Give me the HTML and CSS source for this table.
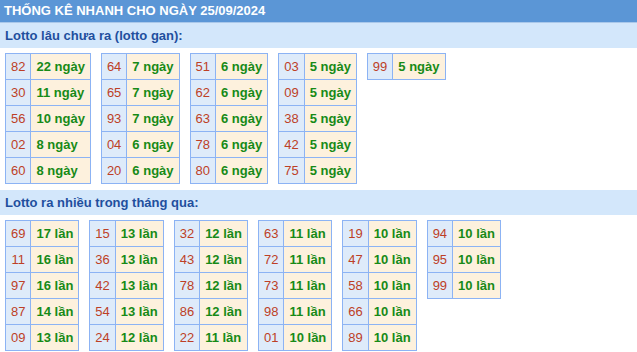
FILE: index.html
```html
<!DOCTYPE html>
<html lang="vi">
<head>
<meta charset="utf-8">
<link rel="stylesheet" href="styles.css">
</head>
<body>
<div class="title">THỐNG KÊ NHANH CHO NGÀY 25/09/2024</div>
<div class="section">Lotto lâu chưa ra (lotto gan):</div>
<div class="tables">
  <table><tr><td class="n">82</td><td class="v">22 ngày</td></tr><tr><td class="n">30</td><td class="v">11 ngày</td></tr><tr><td class="n">56</td><td class="v">10 ngày</td></tr><tr><td class="n">02</td><td class="v">8 ngày</td></tr><tr><td class="n">60</td><td class="v">8 ngày</td></tr></table>
  <table><tr><td class="n">64</td><td class="v">7 ngày</td></tr><tr><td class="n">65</td><td class="v">7 ngày</td></tr><tr><td class="n">93</td><td class="v">7 ngày</td></tr><tr><td class="n">04</td><td class="v">6 ngày</td></tr><tr><td class="n">20</td><td class="v">6 ngày</td></tr></table>
  <table><tr><td class="n">51</td><td class="v">6 ngày</td></tr><tr><td class="n">62</td><td class="v">6 ngày</td></tr><tr><td class="n">63</td><td class="v">6 ngày</td></tr><tr><td class="n">78</td><td class="v">6 ngày</td></tr><tr><td class="n">80</td><td class="v">6 ngày</td></tr></table>
  <table><tr><td class="n">03</td><td class="v">5 ngày</td></tr><tr><td class="n">09</td><td class="v">5 ngày</td></tr><tr><td class="n">38</td><td class="v">5 ngày</td></tr><tr><td class="n">42</td><td class="v">5 ngày</td></tr><tr><td class="n">75</td><td class="v">5 ngày</td></tr></table>
  <table><tr><td class="n">99</td><td class="v">5 ngày</td></tr></table>
</div>
<div class="section">Lotto ra nhiều trong tháng qua:</div>
<div class="tables">
  <table><tr><td class="n">69</td><td class="v">17 lần</td></tr><tr><td class="n">11</td><td class="v">16 lần</td></tr><tr><td class="n">97</td><td class="v">16 lần</td></tr><tr><td class="n">87</td><td class="v">14 lần</td></tr><tr><td class="n">09</td><td class="v">13 lần</td></tr></table>
  <table><tr><td class="n">15</td><td class="v">13 lần</td></tr><tr><td class="n">36</td><td class="v">13 lần</td></tr><tr><td class="n">42</td><td class="v">13 lần</td></tr><tr><td class="n">54</td><td class="v">13 lần</td></tr><tr><td class="n">24</td><td class="v">12 lần</td></tr></table>
  <table><tr><td class="n">32</td><td class="v">12 lần</td></tr><tr><td class="n">43</td><td class="v">12 lần</td></tr><tr><td class="n">78</td><td class="v">12 lần</td></tr><tr><td class="n">86</td><td class="v">12 lần</td></tr><tr><td class="n">22</td><td class="v">11 lần</td></tr></table>
  <table><tr><td class="n">63</td><td class="v">11 lần</td></tr><tr><td class="n">72</td><td class="v">11 lần</td></tr><tr><td class="n">73</td><td class="v">11 lần</td></tr><tr><td class="n">98</td><td class="v">11 lần</td></tr><tr><td class="n">01</td><td class="v">10 lần</td></tr></table>
  <table><tr><td class="n">19</td><td class="v">10 lần</td></tr><tr><td class="n">47</td><td class="v">10 lần</td></tr><tr><td class="n">58</td><td class="v">10 lần</td></tr><tr><td class="n">66</td><td class="v">10 lần</td></tr><tr><td class="n">89</td><td class="v">10 lần</td></tr></table>
  <table><tr><td class="n">94</td><td class="v">10 lần</td></tr><tr><td class="n">95</td><td class="v">10 lần</td></tr><tr><td class="n">99</td><td class="v">10 lần</td></tr></table>
</div>
</body>
</html>
```

FILE: styles.css
```css
html, body {
  margin: 0;
  padding: 0;
  background: #ffffff;
  font-family: "Liberation Sans", Arial, sans-serif;
  font-size: 13px;
}

.title {
  height: 22px;
  line-height: 22px;
  padding-left: 4px;
  background: #5b96d6;
  color: #ffffff;
  font-weight: bold;
  border-bottom: 1px solid #aac8ea;
}

.section {
  height: 25px;
  line-height: 25px;
  padding-left: 5px;
  background: #d3e7fb;
  color: #1f4f9e;
  font-weight: bold;
}

.tables {
  display: flex;
  align-items: flex-start;
  gap: 10px;
  padding: 5px 5px 6px 5px;
}

table {
  border-collapse: collapse;
}

td {
  border: 1px solid #8cb3f4;
  height: 25px;
  padding: 0 5px;
  white-space: nowrap;
}

td.n {
  background: #deebfa;
  color: #bd3f26;
  text-align: center;
}

td.v {
  background: #fdf1dd;
  color: #178a17;
  font-weight: bold;
  text-align: left;
}
```
